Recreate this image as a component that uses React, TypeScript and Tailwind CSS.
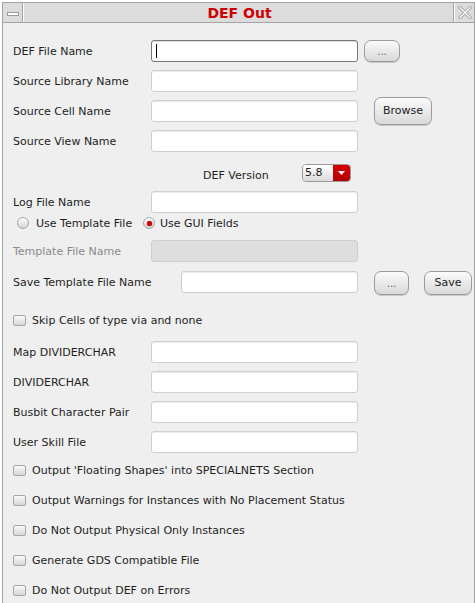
import React from "react";

const Input = ({ w = 207, focused = false, disabled = false }: { w?: number; focused?: boolean; disabled?: boolean }) => (
  <div
    style={{ width: w }}
    className={
      "relative h-[22px] shrink-0 rounded-[3px] border " +
      (disabled
        ? "border-[#cfcfcf] bg-[#dedede]"
        : focused
        ? "border-[#777777] bg-white shadow-[inset_0_1px_0_#e0e0e0]"
        : "border-[#cfcfcf] bg-white shadow-[inset_0_1px_0_#ececec]")
    }
  >
    {focused && <div className="absolute left-[4px] top-[3px] h-[14px] w-px bg-black" />}
  </div>
);

const Btn = ({ w, h, children, muted = false }: { w: number; h: number; children: React.ReactNode; muted?: boolean }) => (
  <div
    style={{ width: w, height: h }}
    className={
      "flex shrink-0 items-center justify-center rounded-[7px] border border-[#9c9c9c] bg-gradient-to-b from-[#fbfbfb] to-[#d9d9d9] shadow-[0_1px_0_#c8c8c8] " +
      (muted ? "text-[#666] text-[10px]" : "text-[#222]")
    }
  >
    {children}
  </div>
);

const Check = () => (
  <div className="ml-[10px] h-[11px] w-[13px] shrink-0 rounded-[2px] border border-[#a6a6a6] bg-gradient-to-b from-[#fafafa] to-[#d6d6d6]" />
);

const Radio = ({ on = false }: { on?: boolean }) => (
  <div className="flex h-[12px] w-[12px] shrink-0 items-center justify-center rounded-full border border-[#a8a8a8] bg-gradient-to-b from-[#fdfdfd] to-[#d4d4d4]">
    {on && <div className="h-[5px] w-[5px] rounded-full bg-[#d40000] shadow-[0_0_1px_#900]" />}
  </div>
);

const LabelRow = ({
  label,
  labelW = 148,
  children,
  className = "",
  muted = false,
}: {
  label: string;
  labelW?: number;
  children?: React.ReactNode;
  className?: string;
  muted?: boolean;
}) => (
  <div className={"flex h-[22px] items-center " + className}>
    <span style={{ width: labelW }} className={"shrink-0 pl-[10px] pt-[2px] whitespace-nowrap " + (muted ? "text-[#8a8a8a]" : "")}>
      {label}
    </span>
    {children}
  </div>
);

const CheckRow = ({ label, className = "" }: { label: string; className?: string }) => (
  <div className={"flex items-center " + className}>
    <Check />
    <span className="ml-[6px] pt-[2px] whitespace-nowrap">{label}</span>
  </div>
);

export default function App() {
  return (
    <div className="h-[603px] w-[475px] overflow-hidden bg-white font-['DejaVu_Sans',sans-serif] text-[11px] text-[#1e1e1e]">
      <div className="ml-[2px] mt-[2px] h-[620px] w-[473px] border border-[#a3a3a3] bg-[#efefef]">
        {/* title bar */}
        <div className="flex h-[20px] border-b border-[#a3a3a3] bg-[#dcdcdc]">
          <div className="flex w-[20px] items-center justify-center border-r border-[#a3a3a3]">
            <div className="mt-[3px] h-[4px] w-[12px] border border-[#9a9a9a] bg-white" />
          </div>
          <div className="flex flex-1 items-center justify-center border-l border-white border-r border-r-[#a3a3a3] pl-[2px] text-[14px] font-bold leading-none text-[#cc0000]">
            DEF Out
          </div>
          <div className="flex w-[20px] items-center justify-center border-l border-white">
            <svg width="14" height="13" viewBox="0 0 14 13">
              <path d="M2 1.5 L12 11.5 M12 1.5 L2 11.5" stroke="#a9a9a9" strokeWidth="3.2" strokeLinecap="square" />
              <path d="M2 1.5 L12 11.5 M12 1.5 L2 11.5" stroke="#f4f4f4" strokeWidth="1.4" strokeLinecap="square" />
            </svg>
          </div>
        </div>

        {/* body */}
        <div className="flex flex-col pt-[17px]">
          <LabelRow label="DEF File Name">
            <Input focused />
            <div className="ml-[6px]">
              <Btn w={36} h={22} muted>
                ...
              </Btn>
            </div>
          </LabelRow>
          <LabelRow label="Source Library Name" className="mt-[8px]">
            <Input />
          </LabelRow>
          <LabelRow label="Source Cell Name" className="mt-[8px]">
            <Input />
            <div className="ml-[16px]">
              <Btn w={58} h={28}>
                Browse
              </Btn>
            </div>
          </LabelRow>
          <LabelRow label="Source View Name" className="mt-[8px]">
            <Input />
          </LabelRow>

          {/* DEF version */}
          <div className="mt-[12px] flex h-[18px] items-center">
            <span className="w-[299px] shrink-0 pl-[200px] pt-[7px] whitespace-nowrap">DEF Version</span>
            <div className="flex h-[18px] w-[49px] overflow-hidden rounded-[4px] border border-[#9a9a9a]">
              <div className="flex flex-1 items-center bg-gradient-to-b from-[#ffffff] to-[#dadada] pl-[2px] text-[11px]">5.8</div>
              <div className="flex w-[17px] items-center justify-center bg-gradient-to-b from-[#d80000] to-[#b00000]">
                <svg width="7" height="4" viewBox="0 0 7 4">
                  <path d="M0 0 L7 0 L3.5 4 Z" fill="#ffffff" />
                </svg>
              </div>
            </div>
          </div>

          <LabelRow label="Log File Name" className="mt-[9px]">
            <Input />
          </LabelRow>

          {/* radios */}
          <div className="mt-[2px] flex h-[16px] items-center">
            <div className="ml-[14px] flex w-[126px] items-center">
              <Radio />
              <span className="ml-[7px] pt-[2px] whitespace-nowrap">Use Template File</span>
            </div>
            <div className="flex items-center">
              <Radio on />
              <span className="ml-[5px] pt-[2px] whitespace-nowrap">Use GUI Fields</span>
            </div>
          </div>

          <LabelRow label="Template File Name" className="mt-[9px]" muted>
            <Input disabled />
          </LabelRow>

          <div className="mt-[9px] flex h-[24px] items-start">
            <span className="flex h-[22px] w-[178px] shrink-0 items-center pl-[10px] pt-[2px] whitespace-nowrap">Save Template File Name</span>
            <Input w={177} />
            <div className="ml-[16px]">
              <Btn w={35} h={24} muted>
                ...
              </Btn>
            </div>
            <div className="ml-[15px]">
              <Btn w={48} h={24}>
                Save
              </Btn>
            </div>
          </div>

          <CheckRow label="Skip Cells of type via and none" className="mt-[17px] h-[16px]" />

          <LabelRow label="Map DIVIDERCHAR" className="mt-[13px]">
            <Input />
          </LabelRow>
          <LabelRow label="DIVIDERCHAR" className="mt-[8px]">
            <Input />
          </LabelRow>
          <LabelRow label="Busbit Character Pair" className="mt-[8px]">
            <Input />
          </LabelRow>
          <LabelRow label="User Skill File" className="mt-[8px]">
            <Input />
          </LabelRow>

          <div className="mt-[2px] flex flex-col">
            <CheckRow label="Output 'Floating Shapes' into SPECIALNETS Section" className="h-[30px]" />
            <CheckRow label="Output Warnings for Instances with No Placement Status" className="h-[30px]" />
            <CheckRow label="Do Not Output Physical Only Instances" className="h-[30px]" />
            <CheckRow label="Generate GDS Compatible File" className="h-[30px]" />
            <CheckRow label="Do Not Output DEF on Errors" className="h-[30px]" />
          </div>
        </div>
      </div>
    </div>
  );
}
